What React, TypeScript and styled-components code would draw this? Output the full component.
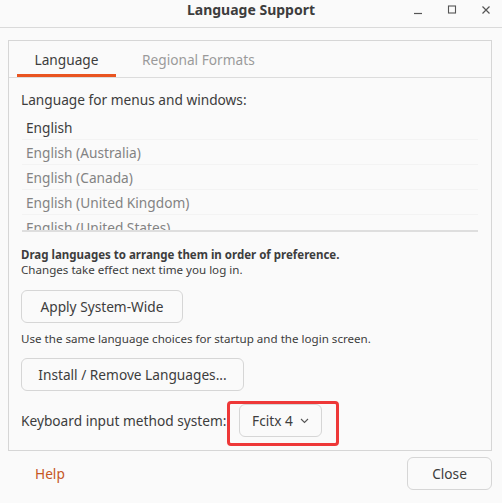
import React from 'react';
import styled, { createGlobalStyle } from 'styled-components';

const GlobalStyle = createGlobalStyle`
  html, body {
    margin: 0;
    padding: 0;
    background: #fafafa;
    font-family: "Noto Sans", "DejaVu Sans", sans-serif;
    color: #3d3d3d;
  }
`;

const Window = styled.div`
  width: 502px;
  height: 503px;
  display: flex;
  flex-direction: column;
  background: #fafafa;
  overflow: hidden;
`;

const TitleBar = styled.div`
  height: 28px;
  box-sizing: border-box;
  border-bottom: 1px solid #dadada;
  display: grid;
  grid-template-columns: 1fr auto 1fr;
  align-items: start;
`;

const Title = styled.div`
  grid-column: 2;
  font-weight: bold;
  font-size: 14px;
  line-height: 20px;
  color: #3d3d3d;
`;

const Controls = styled.div`
  grid-column: 3;
  display: flex;
  justify-content: flex-end;
  margin-right: -1px;
`;

const ControlButton = styled.div`
  width: 34px;
  height: 20px;
  display: flex;
  align-items: center;
  justify-content: center;
`;

const Body = styled.div`
  padding: 12px 10px 0 8px;
`;

const Panel = styled.div`
  border: 1px solid #d6d6d6;
  height: 409px;
  display: flex;
  flex-direction: column;
`;

const TabBar = styled.div`
  height: 36px;
  border-bottom: 1px solid #dcdcdc;
  display: flex;
  padding-left: 8px;
`;

const Tab = styled.div<{ $active?: boolean }>`
  height: 36px;
  box-sizing: border-box;
  width: ${(p) => (p.$active ? '99px' : 'auto')};
  padding: 3px ${(p) => (p.$active ? '0' : '26px')} 0;
  display: flex;
  align-items: center;
  justify-content: center;
  font-size: 13.7px;
  color: ${(p) => (p.$active ? '#3d3d3d' : '#9a9a9a')};
  border-bottom: 3px solid ${(p) => (p.$active ? '#e95420' : 'transparent')};
`;

const Content = styled.div`
  padding: 12px 12px 0 12px;
  display: flex;
  flex-direction: column;
`;

const Label = styled.div`
  font-size: 13.7px;
  line-height: 20px;
  color: #3d3d3d;
  white-space: nowrap;
`;

const LangList = styled.div`
  margin: 5px 1px 0 1px;
  height: 115px;
  overflow: hidden;
  border-bottom: 2px solid #dedede;
`;

const LangRow = styled.div<{ $primary?: boolean }>`
  height: 25px;
  box-sizing: border-box;
  border-bottom: 1px solid #f3f3f3;
  padding-left: 4px;
  display: flex;
  align-items: center;
  font-size: 13.7px;
  color: ${(p) => (p.$primary ? '#3d3d3d' : '#838383')};
`;

const HintGroup = styled.div<{ $top: number }>`
  margin-top: ${(p) => p.$top}px;
  display: flex;
  flex-direction: column;
`;

const Hint = styled.div<{ $bold?: boolean }>`
  font-size: ${(p) => (p.$bold ? '11.5px' : '11.6px')};
  line-height: 15px;
  font-weight: ${(p) => (p.$bold ? 'bold' : 'normal')};
  color: #3d3d3d;
  white-space: nowrap;
`;

const Button = styled.button<{ $width: number }>`
  box-sizing: border-box;
  height: 33px;
  width: ${(p) => p.$width}px;
  padding: 0;
  border: 1px solid #d6d6d6;
  border-radius: 6px;
  background: #fafafa;
  font-family: inherit;
  font-size: 13.7px;
  color: #3d3d3d;
  white-space: nowrap;
  display: flex;
  align-items: center;
  justify-content: center;
`;

const ButtonRow = styled.div<{ $top: number }>`
  margin-top: ${(p) => p.$top}px;
  display: flex;
`;

const KeyboardRow = styled.div`
  margin-top: 13px;
  display: flex;
  align-items: flex-start;
`;

const KeyboardLabel = styled(Label)`
  width: 211px;
  line-height: 33px;
`;

const Highlight = styled.div`
  margin: -3px 0 0 -5px;
  padding: 0 14px 6px 9px;
  border: 3px solid #ee3838;
  border-radius: 4px;
  display: flex;
`;

const Dropdown = styled.div`
  box-sizing: border-box;
  height: 33px;
  width: 83px;
  border: 1px solid #d6d6d6;
  border-radius: 6px;
  display: flex;
  align-items: center;
  justify-content: center;
  gap: 7px;
  font-size: 13.7px;
  color: #3d3d3d;
`;

const Footer = styled.div`
  display: flex;
  justify-content: space-between;
  align-items: center;
  padding: 6px 10px 0 35px;
`;

const HelpLink = styled.div`
  font-size: 13.7px;
  color: #c6561f;
`;

const Chevron = () => (
  <svg width="9" height="6" viewBox="0 0 9 6" fill="none">
    <path d="M1 1l3.5 3.5L8 1" stroke="#555" strokeWidth="1.1" />
  </svg>
);

const languages = [
  'English',
  'English (Australia)',
  'English (Canada)',
  'English (United Kingdom)',
  'English (United States)',
];

export default function App() {
  return (
    <>
      <GlobalStyle />
      <Window>
        <TitleBar>
          <Title>Language Support</Title>
          <Controls>
            <ControlButton>
              <svg width="10" height="10" viewBox="0 0 10 10">
                <path d="M1 8.5h8" stroke="#555" strokeWidth="1.2" />
              </svg>
            </ControlButton>
            <ControlButton>
              <svg width="10" height="10" viewBox="0 0 10 10">
                <rect x="1.5" y="1" width="7" height="7" fill="none" stroke="#555" strokeWidth="1.1" />
              </svg>
            </ControlButton>
            <ControlButton>
              <svg width="10" height="10" viewBox="0 0 10 10">
                <path d="M1.5 1.5l7 7M8.5 1.5l-7 7" stroke="#555" strokeWidth="1.2" />
              </svg>
            </ControlButton>
          </Controls>
        </TitleBar>
        <Body>
          <Panel>
            <TabBar>
              <Tab $active>Language</Tab>
              <Tab>Regional Formats</Tab>
            </TabBar>
            <Content>
              <Label>Language for menus and windows:</Label>
              <LangList>
                {languages.map((lang, i) => (
                  <LangRow key={lang} $primary={i === 0}>
                    {lang}
                  </LangRow>
                ))}
              </LangList>
              <HintGroup $top={15}>
                <Hint $bold>Drag languages to arrange them in order of preference.</Hint>
                <Hint>Changes take effect next time you log in.</Hint>
              </HintGroup>
              <ButtonRow $top={13}>
                <Button $width={162}>Apply System-Wide</Button>
              </ButtonRow>
              <HintGroup $top={8}>
                <Hint>Use the same language choices for startup and the login screen.</Hint>
              </HintGroup>
              <ButtonRow $top={12}>
                <Button $width={223}>Install / Remove Languages...</Button>
              </ButtonRow>
              <KeyboardRow>
                <KeyboardLabel>Keyboard input method system:</KeyboardLabel>
                <Highlight>
                  <Dropdown>
                    Fcitx 4 <Chevron />
                  </Dropdown>
                </Highlight>
              </KeyboardRow>
            </Content>
          </Panel>
        </Body>
        <Footer>
          <HelpLink>Help</HelpLink>
          <Button $width={85}>Close</Button>
        </Footer>
      </Window>
    </>
  );
}
